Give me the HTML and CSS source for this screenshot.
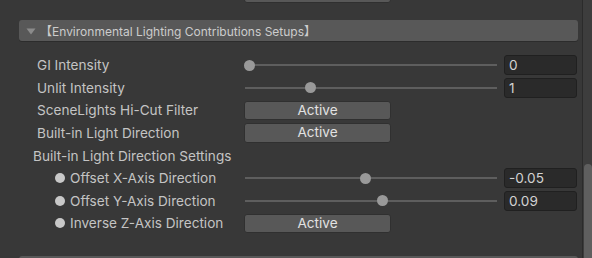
FILE: index.html
```html
<!DOCTYPE html>
<html>
<head>
<meta charset="utf-8">
<link rel="stylesheet" href="styles.css">
</head>
<body>
<div class="window">
  <div class="inspector">
    <div class="top-strip"><div class="btn top-btn"></div></div>
    <div class="foldout">
      <svg class="tri" width="10" height="7" viewBox="0 0 10 7"><polygon points="0.5,0.5 9.5,0.5 5,6.5" fill="#8b8b8b"/></svg>
      <span class="foldout-title">【Environmental Lighting Contributions Setups】</span>
    </div>
    <div class="rows">
      <div class="row">
        <div class="label">GI Intensity</div>
        <div class="control">
          <div class="slider"><div class="track"></div><div class="thumb" style="left:0px"></div></div>
          <div class="field">0</div>
        </div>
      </div>
      <div class="row">
        <div class="label">Unlit Intensity</div>
        <div class="control">
          <div class="slider"><div class="track"></div><div class="thumb" style="left:61px"></div></div>
          <div class="field">1</div>
        </div>
      </div>
      <div class="row">
        <div class="label">SceneLights Hi-Cut Filter</div>
        <div class="control"><div class="btn">Active</div></div>
      </div>
      <div class="row">
        <div class="label">Built-in Light Direction</div>
        <div class="control"><div class="btn">Active</div></div>
      </div>
      <div class="row">
        <div class="label heading">Built-in Light Direction Settings</div>
      </div>
      <div class="row">
        <div class="label sub"><span class="dot"></span>Offset X-Axis Direction</div>
        <div class="control">
          <div class="slider"><div class="track"></div><div class="thumb" style="left:116px"></div></div>
          <div class="field">-0.05</div>
        </div>
      </div>
      <div class="row">
        <div class="label sub"><span class="dot"></span>Offset Y-Axis Direction</div>
        <div class="control">
          <div class="slider"><div class="track"></div><div class="thumb" style="left:133px"></div></div>
          <div class="field">0.09</div>
        </div>
      </div>
      <div class="row">
        <div class="label sub"><span class="dot"></span>Inverse Z-Axis Direction</div>
        <div class="control"><div class="btn">Active</div></div>
      </div>
    </div>
    <div class="foldout next"></div>
  </div>
  <div class="divider"></div>
  <div class="scrollbar"><div class="scroll-thumb"></div></div>
</div>
</body>
</html>
```
FILE: styles.css
```css
html, body {
  margin: 0;
  padding: 0;
  background: #383838;
  height: 100%;
  overflow: hidden;
}
body {
  font-family: Inter, "Noto Sans", "Noto Sans CJK JP", sans-serif;
  font-size: 13.6px;
  color: #c4c4c4;
}
.window {
  display: flex;
  height: 258px;
  width: 592px;
}
.inspector {
  width: 582px;
  padding-left: 19px;
  box-sizing: border-box;
  overflow: hidden;
}
.divider {
  width: 1px;
  background: #2b2b2b;
}
.scrollbar {
  flex: 1;
  background: #3d3d3d;
  display: flex;
  flex-direction: column;
  justify-content: flex-end;
  padding-left: 1px;
}
.scroll-thumb {
  height: 94px;
  background: #5f5f5f;
  border-radius: 4px 4px 0 0;
}
.top-strip {
  height: 3px;
  display: flex;
  align-items: flex-end;
  padding-left: 225px;
}
.top-btn {
  width: 146px;
  height: 20px;
  flex: none;
}
.foldout {
  margin-top: 17px;
  width: 559px;
  height: 21px;
  background: #585858;
  border-radius: 3px;
  box-shadow: 0 1px 0 #2c2c2c;
  display: flex;
  align-items: center;
  box-sizing: border-box;
  padding-left: 7px;
}
.tri {
  display: block;
  margin-top: 1px;
}
.foldout-title {
  margin-left: 4px;
  color: #cccccc;
  font-size: 12px;
  white-space: nowrap;
}
.foldout.next {
  margin-top: 21px;
}
.rows {
  margin-top: 13px;
  display: flex;
  flex-direction: column;
}
.row {
  height: 22.6px;
  display: flex;
  align-items: center;
}
.label {
  width: 225px;
  box-sizing: border-box;
  padding-left: 18px;
  white-space: nowrap;
  display: flex;
  align-items: center;
}
.label.heading {
  padding-left: 14px;
}
.label.sub {
  padding-left: 36px;
}
.dot {
  width: 10px;
  height: 10px;
  border-radius: 50%;
  background: #c8c8c8;
  margin-right: 5px;
  flex: none;
}
.control {
  display: flex;
  align-items: center;
}
.slider {
  position: relative;
  width: 253px;
  height: 11px;
}
.track {
  position: absolute;
  left: 1px;
  right: 0;
  top: 4.5px;
  height: 2px;
  background: #5e5e5e;
}
.thumb {
  position: absolute;
  top: 0;
  width: 11px;
  height: 11px;
  border-radius: 50%;
  background: #999999;
}
.field {
  margin-left: 7px;
  width: 73px;
  height: 20px;
  box-sizing: border-box;
  background: #2a2a2a;
  border: 1px solid #202020;
  border-radius: 3px;
  color: #d2d2d2;
  padding-left: 4px;
  line-height: 18px;
}
.btn {
  width: 147px;
  height: 19.5px;
  box-sizing: border-box;
  background: #585858;
  border: 1px solid #303030;
  border-radius: 3px;
  color: #e2e2e2;
  text-align: center;
  line-height: 17px;
}
```
